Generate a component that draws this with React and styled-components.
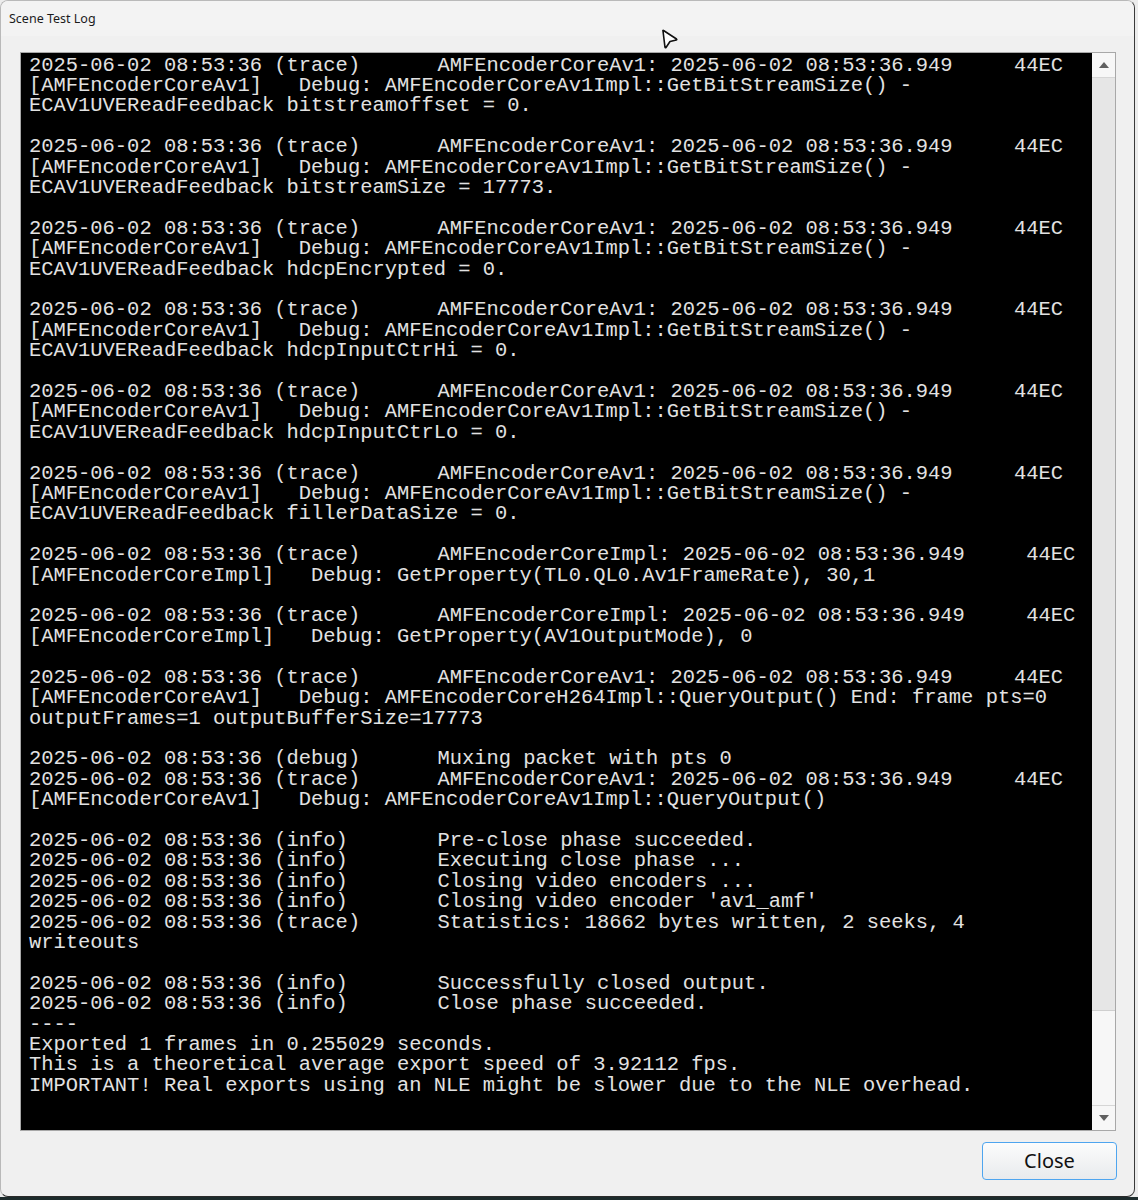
import React from "react";
import styled, { createGlobalStyle } from "styled-components";

const GlobalStyle = createGlobalStyle`
  html, body {
    margin: 0;
    padding: 0;
    background: #ececec;
  }
`;

const Page = styled.div`
  width: 1138px;
  height: 1200px;
  display: flex;
  flex-direction: column;
  overflow: hidden;
`;

const Window = styled.div`
  position: relative;
  width: 1135px;
  height: 1197px;
  box-sizing: border-box;
  display: flex;
  flex-direction: column;
  background: #f0f0f0;
  border: 1px solid #b9b9b9;
  border-right-color: #3a3a3a;
  border-bottom-color: #2a2a2a;
  border-radius: 8px;
  overflow: hidden;
`;

const Desktop = styled.div`
  flex: 1;
  background: #1d2b2c;
`;

const TitleBar = styled.div`
  height: 35px;
  display: flex;
  align-items: center;
  padding-left: 8px;
  background: #f3f3f3;
  font-family: "Noto Sans", "Open Sans", sans-serif;
  font-size: 12.5px;
  color: #1b1b1b;
`;

const Cursor = styled.svg`
  position: absolute;
  left: 659px;
  top: 28px;
`;

const Body = styled.div`
  flex: 1;
  display: flex;
  flex-direction: column;
  padding: 16px 18px 0 19px;
`;

const Frame = styled.div`
  height: 1079px;
  box-sizing: border-box;
  display: flex;
  border: 1px solid #a8a8a8;
`;

const Log = styled.div`
  flex: 1;
  background: #000;
  padding: 2.5px 0 0 8px;
  overflow: hidden;
  font-family: "Liberation Mono", monospace;
  font-size: 20.45px;
  line-height: 20.42px;
  color: #e2e2e2;
  white-space: pre;
`;

const Line = styled.div`
  height: 20.42px;
`;

const Stamp = styled.span`
  display: inline-block;
  width: 408.5px;
`;

const ScrollBar = styled.div`
  width: 23px;
  display: flex;
  flex-direction: column;
  background: #e6e6e6;
`;

const ArrowButton = styled.div`
  height: 25px;
  box-sizing: border-box;
  display: flex;
  align-items: center;
  justify-content: center;
  background: #f7f7f7;
  border-${(p) => (p.$down ? "top" : "bottom")}: 1px solid #d6d6d6;
`;

const Track = styled.div`
  flex: 1;
  display: flex;
  flex-direction: column;
  justify-content: flex-end;
`;

const Thumb = styled.div`
  height: 94px;
  background: #f7f7f7;
  border-top: 1px solid #cfcfcf;
`;

const Footer = styled.div`
  display: flex;
  justify-content: flex-end;
  margin-top: 11px;
  margin-right: -1px;
`;

const Button = styled.button`
  width: 135px;
  height: 38px;
  box-sizing: border-box;
  border: 1px solid #4ea5ef;
  border-radius: 4px;
  background: linear-gradient(#fcfcfc, #e8eaed);
  font-family: "Noto Sans", "Open Sans", sans-serif;
  font-size: 20px;
  color: #111;
  padding: 0 0 2px;
`;

const Arrow = ({ down }) => (
  <svg width="10" height="6" viewBox="0 0 10 6">
    <path d={down ? "M0 0 L10 0 L5 6 Z" : "M0 6 L10 6 L5 0 Z"} fill="#606060" />
  </svg>
);

const T = "2025-06-02 08:53:36 (trace)";
const INFO = "2025-06-02 08:53:36 (info)";
const AV1 = "AMFEncoderCoreAv1: 2025-06-02 08:53:36.949     44EC";
const IMPL = "AMFEncoderCoreImpl: 2025-06-02 08:53:36.949     44EC";

const fields = [
  "bitstreamoffset = 0.",
  "bitstreamSize = 17773.",
  "hdcpEncrypted = 0.",
  "hdcpInputCtrHi = 0.",
  "hdcpInputCtrLo = 0.",
  "fillerDataSize = 0.",
];

const lines = [
  ...fields.flatMap((f) => [
    [T, AV1],
    "[AMFEncoderCoreAv1]   Debug: AMFEncoderCoreAv1Impl::GetBitStreamSize() -",
    "ECAV1UVEReadFeedback " + f,
    "",
  ]),
  [T, IMPL],
  "[AMFEncoderCoreImpl]   Debug: GetProperty(TL0.QL0.Av1FrameRate), 30,1",
  "",
  [T, IMPL],
  "[AMFEncoderCoreImpl]   Debug: GetProperty(AV1OutputMode), 0",
  "",
  [T, AV1],
  "[AMFEncoderCoreAv1]   Debug: AMFEncoderCoreH264Impl::QueryOutput() End: frame pts=0",
  "outputFrames=1 outputBufferSize=17773",
  "",
  ["2025-06-02 08:53:36 (debug)", "Muxing packet with pts 0"],
  [T, AV1],
  "[AMFEncoderCoreAv1]   Debug: AMFEncoderCoreAv1Impl::QueryOutput()",
  "",
  [INFO, "Pre-close phase succeeded."],
  [INFO, "Executing close phase ..."],
  [INFO, "Closing video encoders ..."],
  [INFO, "Closing video encoder 'av1_amf'"],
  [T, "Statistics: 18662 bytes written, 2 seeks, 4"],
  "writeouts",
  "",
  [INFO, "Successfully closed output."],
  [INFO, "Close phase succeeded."],
  "----",
  "Exported 1 frames in 0.255029 seconds.",
  "This is a theoretical average export speed of 3.92112 fps.",
  "IMPORTANT! Real exports using an NLE might be slower due to the NLE overhead.",
];

export default function App() {
  return (
    <Page>
      <GlobalStyle />
      <Window>
        <TitleBar>Scene Test Log</TitleBar>
        <Cursor width="20" height="22" viewBox="0 0 20 22">
          <path
            d="M3 2 Q2.5 1.2 3.5 1.5 L16.5 10 Q17.2 10.6 16.3 11 L10 12.5 L6 18.5 Q5.4 19.2 5 18.3 Z"
            fill="#fff"
            stroke="#111"
            strokeWidth="1.6"
            strokeLinejoin="round"
          />
        </Cursor>
        <Body>
          <Frame>
            <Log>
              {lines.map((l, i) => (
                <Line key={i}>
                  {Array.isArray(l) ? (
                    <>
                      <Stamp>{l[0]}</Stamp>
                      {l[1]}
                    </>
                  ) : (
                    l
                  )}
                </Line>
              ))}
            </Log>
            <ScrollBar>
              <ArrowButton>
                <Arrow />
              </ArrowButton>
              <Track>
                <Thumb />
              </Track>
              <ArrowButton $down>
                <Arrow down />
              </ArrowButton>
            </ScrollBar>
          </Frame>
          <Footer>
            <Button>Close</Button>
          </Footer>
        </Body>
      </Window>
      <Desktop />
    </Page>
  );
}
